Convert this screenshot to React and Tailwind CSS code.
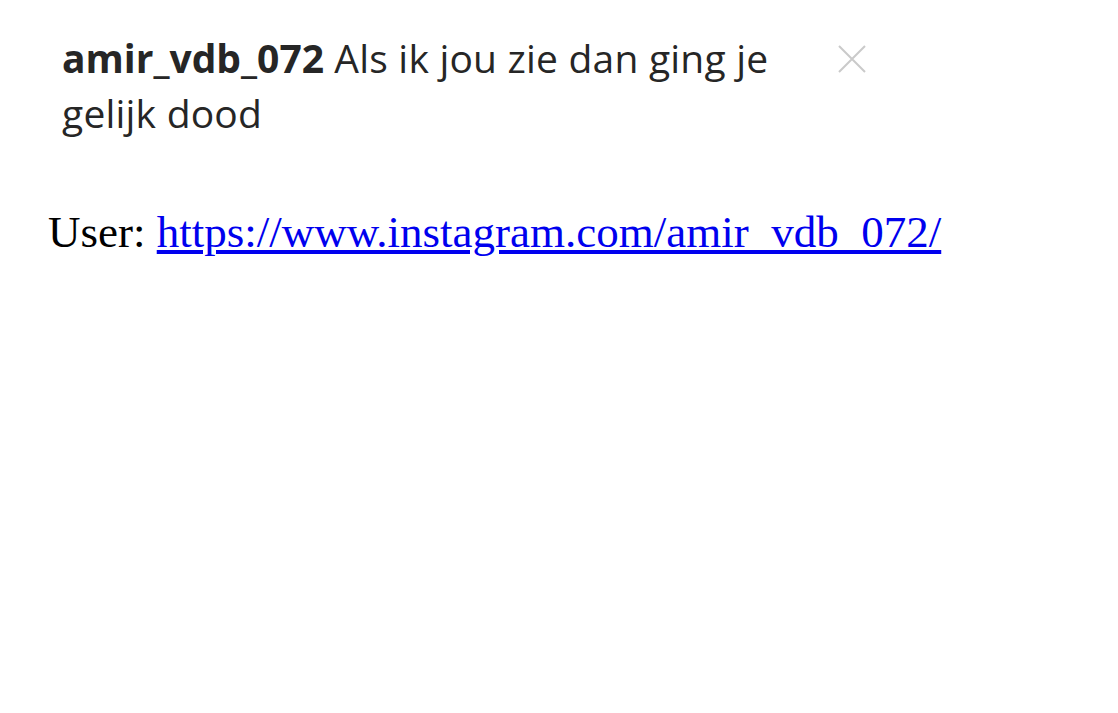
const App = () => {
  return (
    <div className="min-h-screen bg-white pl-[48px] pt-[30px]">
      <div className="flex flex-row items-start w-[840px] pl-[14px]">
        <p
          className="w-[740px] text-[39px] leading-[55px] text-[#262626] tracking-[0.2px]"
          style={{ fontFamily: '"Open Sans", sans-serif' }}
        >
          <span className="font-bold tracking-[0px]">amir_vdb_072</span> Als ik jou zie dan ging je gelijk dood
        </p>
        <svg
          className="mt-[13px] ml-[34px]"
          width="32"
          height="32"
          viewBox="0 0 32 32"
          fill="none"
          stroke="#cacaca"
          strokeWidth="2"
        >
          <path d="M3 3 L29 29 M29 3 L3 29" />
        </svg>
      </div>
      <p
        className="mt-[59px] text-[45px] text-black"
        style={{ fontFamily: '"Liberation Serif", serif' }}
      >
        User:{" "}
        <a href="https://www.instagram.com/amir_vdb_072/" className="text-[#0000ee] underline">
          https://www.instagram.com/amir_vdb_072/
        </a>
      </p>
    </div>
  );
};

export default App;
